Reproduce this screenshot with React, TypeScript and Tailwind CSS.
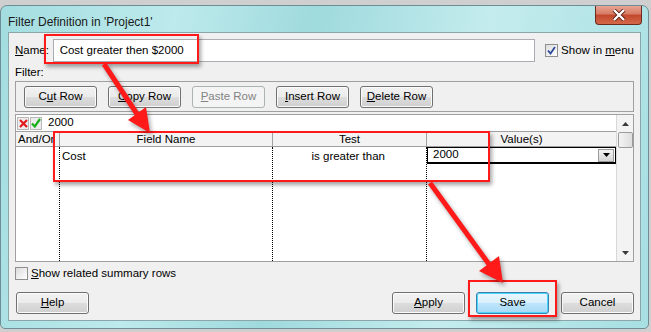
import React from 'react';

type BtnProps = {
  children: React.ReactNode;
  className?: string;
  disabled?: boolean;
  primary?: boolean;
};

const Btn: React.FC<BtnProps> = ({ children, className = '', disabled, primary }) => {
  let look =
    'border-[#707070] text-black bg-[linear-gradient(#f2f2f2_0%,#ebebeb_50%,#dddddd_50%,#cfcfcf_100%)] shadow-[inset_0_0_0_1px_#fbfbfb]';
  if (primary)
    look =
      'border-[#3c7fb1] text-black bg-[linear-gradient(#eaf6fd_0%,#d9f0fc_50%,#bee6fd_50%,#a7d9f5_100%)] shadow-[inset_0_0_0_1px_#48d6fb]';
  if (disabled) look = 'border-[#adb2b5] text-[#838383] bg-[#f4f4f4]';
  return (
    <div
      className={`h-[22px] w-[73px] shrink-0 flex items-center justify-center rounded-[3px] border ${look} ${className}`}
    >
      {children}
    </div>
  );
};

const CheckBox: React.FC<{ checked?: boolean }> = ({ checked }) => (
  <div className="w-[13px] h-[13px] shrink-0 border border-[#8f8f8f] bg-[linear-gradient(135deg,#dcdcdc,#ffffff)] flex items-center justify-center">
    {checked && (
      <svg width="9" height="9" viewBox="0 0 9 9">
        <path d="M1 4.5 L3.5 7.5 L8 1" fill="none" stroke="#2b4a9a" strokeWidth="1.8" />
      </svg>
    )}
  </div>
);

const U: React.FC<{ children: React.ReactNode }> = ({ children }) => (
  <span className="underline underline-offset-[1px]">{children}</span>
);

const Red: React.FC<{ className: string }> = ({ className }) => (
  <div
    className={`absolute border-[2px] border-[#ff1a1a] shadow-[2px_3px_4px_rgba(0,0,0,0.35)] ${className}`}
  />
);

export default function App() {
  return (
    <div className="relative w-[651px] h-[332px] overflow-hidden bg-[#cfcfcf] font-['Liberation_Sans',Arial,sans-serif] text-[11.5px] text-black">
      {/* window */}
      <div className="mt-[5px] w-[649px] h-[324px] rounded-t-[7px] rounded-b-[5px] border border-[#6d8e94] bg-[linear-gradient(100deg,#a3dde0_0%,#bdeaec_25%,#9fdadd_45%,#c4ecee_70%,#a7dfe2_100%)] flex flex-col">
        {/* title bar */}
        <div className="h-[26px] flex items-start justify-between">
          <div className="pl-[7px] pt-[7px] text-[12px] text-[#1a1a1a]">Filter Definition in 'Project1'</div>
          <div className="mr-[6px] w-[47px] h-[19px] rounded-b-[4px] border border-t-0 border-[#6b2a22] bg-[linear-gradient(#e8a493_0%,#d77a63_45%,#c2472b_50%,#d4684a_100%)] flex items-center justify-center">
            <svg width="14" height="12" viewBox="0 0 14 12">
              <path d="M2 1 L12 11 M12 1 L2 11" stroke="#5a1d12" strokeWidth="4" />
              <path d="M2 1 L12 11 M12 1 L2 11" stroke="#ffffff" strokeWidth="2.4" />
            </svg>
          </div>
        </div>

        {/* client */}
        <div className="mx-[7px] h-[289px] border border-[#8aa6ab] bg-[#f0f0f0] flex flex-col px-[6px]">
          <div className="mt-[6px] h-[23px] flex items-center">
            <div className="w-[38px]">
              <U>N</U>ame:
            </div>
            <div className="w-[487px] h-[23px] border border-[#abadb3] bg-white flex items-center pl-[6px]">
              Cost greater then $2000
            </div>
            <div className="ml-[10px] flex items-center gap-[3px] whitespace-nowrap">
              <CheckBox checked />
              <span>
                Show in <U>m</U>enu
              </span>
            </div>
          </div>

          <div className="mt-[3px] h-[14px] leading-[14px]">Filter:</div>

          {/* toolbar */}
          <div className="mt-[2px] h-[31px] border border-[#a0a0a0] flex items-center gap-[11px] pl-[8px]">
            <Btn>
              C<U>u</U>t Row
            </Btn>
            <Btn>
              <U>C</U>opy Row
            </Btn>
            <Btn disabled>
              <U>P</U>aste Row
            </Btn>
            <Btn>
              <U>I</U>nsert Row
            </Btn>
            <Btn>
              <U>D</U>elete Row
            </Btn>
          </div>

          {/* grid */}
          <div className="mt-[2px] h-[148px] border border-[#a0a0a0] bg-white flex">
            <div className="flex-1 flex flex-col">
              <div className="h-[16px] flex items-center gap-[1px] pl-[1px]">
                <div className="w-[12px] h-[13px] border border-[#b8b8b8] bg-[#ececec] flex items-center justify-center">
                  <svg width="9" height="9" viewBox="0 0 9 9">
                    <path d="M1 1 L8 8 M8 1 L1 8" stroke="#e41b1b" strokeWidth="2.2" />
                  </svg>
                </div>
                <div className="w-[12px] h-[13px] border border-[#b8b8b8] bg-[#ececec] flex items-center justify-center">
                  <svg width="10" height="10" viewBox="0 0 10 10">
                    <path d="M1 5.5 L3.8 8.5 L9 1" fill="none" stroke="#17b01b" strokeWidth="2.2" />
                  </svg>
                </div>
                <div className="ml-[5px]">2000</div>
              </div>
              <div className="h-[16px] flex border-y border-[#a0a0a0] bg-[#f3f3f3] leading-[14px]">
                <div className="w-[44px] border-r border-[#a0a0a0] overflow-hidden whitespace-nowrap pl-[2px]">And/Or</div>
                <div className="w-[213px] border-r border-[#a0a0a0] text-center">Field Name</div>
                <div className="w-[154px] border-r border-[#a0a0a0] text-center">Test</div>
                <div className="flex-1 text-center">Value(s)</div>
              </div>
              <div className="flex-1 flex">
                <div className="w-[44px] border-r border-dotted border-black" />
                <div className="w-[213px] border-r border-dotted border-black pl-[2px] pt-[1px]">Cost</div>
                <div className="w-[154px] border-r border-dotted border-black pt-[1px] text-right pr-[41px]">
                  is greater than
                </div>
                <div className="flex-1">
                  <div className="h-[17px] border border-black border-b-[2px] flex items-center justify-between pl-[5px]">
                    <span>2000</span>
                    <div className="w-[16px] h-[13px] mr-[1px] bg-[linear-gradient(#f4f4f4,#d6d6d6)] border border-[#9a9a9a] flex items-center justify-center">
                      <svg width="7" height="4" viewBox="0 0 7 4">
                        <path d="M0 0 L7 0 L3.5 4 Z" fill="#000" />
                      </svg>
                    </div>
                  </div>
                </div>
              </div>
            </div>
            {/* scrollbar */}
            <div className="w-[17px] border-l border-[#d8d8d8] bg-[#f3f3f3] flex flex-col items-center">
              <div className="h-[17px] flex items-center justify-center">
                <svg width="7" height="4" viewBox="0 0 7 4">
                  <path d="M0 4 L7 4 L3.5 0 Z" fill="#3a3a3a" />
                </svg>
              </div>
              <div className="w-[15px] h-[16px] rounded-[2px] border border-[#9a9a9a] bg-[linear-gradient(90deg,#f3f3f3,#dedede)]" />
              <div className="flex-1" />
              <div className="h-[17px] flex items-center justify-center">
                <svg width="7" height="4" viewBox="0 0 7 4">
                  <path d="M0 0 L7 0 L3.5 4 Z" fill="#3a3a3a" />
                </svg>
              </div>
            </div>
          </div>

          <div className="mt-[5px] h-[13px] flex items-center gap-[3px]">
            <CheckBox />
            <span>
              <U>S</U>how related summary rows
            </span>
          </div>

          <div className="mt-[12px] flex items-center">
            <Btn className="ml-[1px]">
              <U>H</U>elp
            </Btn>
            <div className="flex-1" />
            <Btn>
              <U>A</U>pply
            </Btn>
            <Btn primary className="ml-[11px]">
              Save
            </Btn>
            <Btn className="ml-[12px]">Cancel</Btn>
          </div>
        </div>
      </div>

      {/* annotations */}
      <Red className="left-[44px] top-[34px] w-[155px] h-[30px]" />
      <Red className="left-[53px] top-[131px] w-[437px] h-[51px]" />
      <Red className="left-[468px] top-[280px] w-[89px] h-[37px]" />
      <svg
        className="absolute left-0 top-0 pointer-events-none drop-shadow-[2px_3px_2px_rgba(0,0,0,0.35)]"
        width="651"
        height="332"
      >
        <line x1="104" y1="64" x2="139" y2="117" stroke="#ff1a1a" strokeWidth="5" />
        <polygon points="150,133 128,120 146,107" fill="#ff1a1a" />
        <line x1="430" y1="183" x2="491" y2="267" stroke="#ff1a1a" strokeWidth="5" />
        <polygon points="503,283 479,271 499,256" fill="#ff1a1a" />
      </svg>
    </div>
  );
}
